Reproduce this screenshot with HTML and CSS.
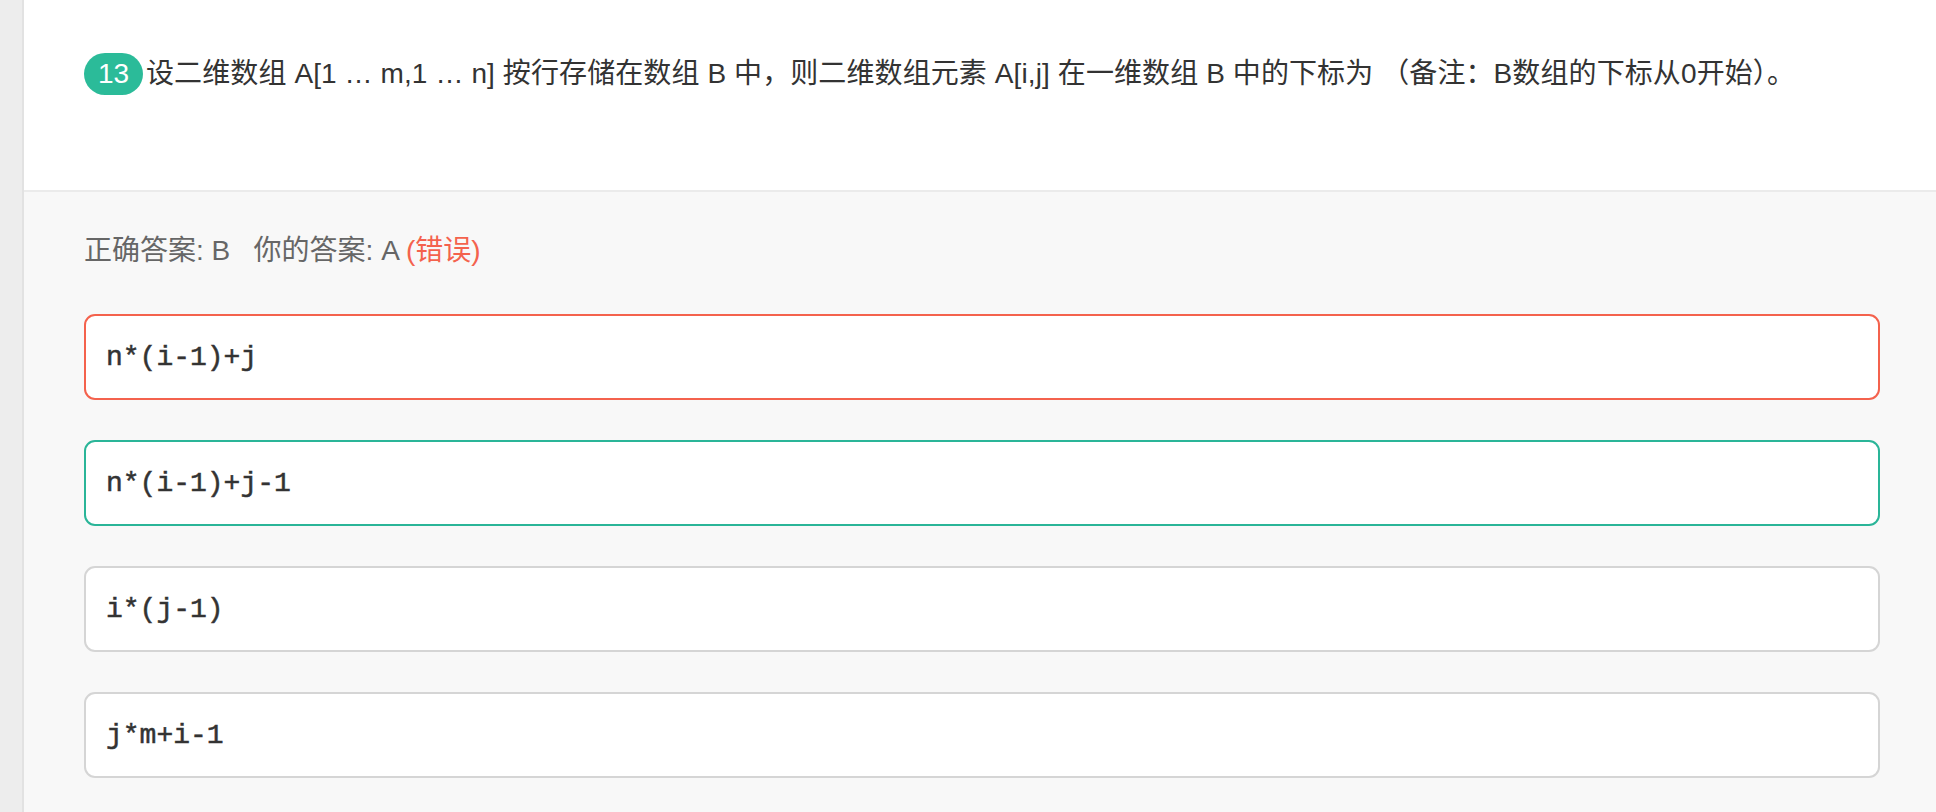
FILE: index.html
```html
<!DOCTYPE html>
<html lang="zh-CN">
<head>
<meta charset="utf-8">
<title>题目 13</title>
<link rel="stylesheet" href="styles.css">
</head>
<body>
<div class="page">
  <aside class="sidebar"></aside>
  <main class="main">
    <section class="question">
      <span class="badge">13</span>
      <span class="q-text">设二维数组 A[1 … m,1 … n] 按行存储在数组 B 中，则二维数组元素 A[i,j] 在一维数组 B 中的下标为 （备注：B数组的下标从0开始）。</span>
    </section>
    <section class="answers">
      <p class="result">正确答案: B &nbsp; 你的答案: A <span class="wrong">(错误)</span></p>
      <ul class="options">
        <li class="option option-wrong">n*(i-1)+j</li>
        <li class="option option-right">n*(i-1)+j-1</li>
        <li class="option">i*(j-1)</li>
        <li class="option">j*m+i-1</li>
      </ul>
    </section>
  </main>
</div>
</body>
</html>
```
FILE: styles.css
```css
* { box-sizing: border-box; }
html, body { margin: 0; padding: 0; height: 100%; }
body {
  font-family: "Liberation Sans", "Noto Sans CJK SC", sans-serif;
  color: #333;
  background: #f8f8f8;
}
.page {
  display: flex;
  min-height: 812px;
}
.sidebar {
  width: 24px;
  flex: none;
  background: #ededed;
  border-right: 2px solid #e2e2e2;
}
.main {
  flex: 1;
  display: flex;
  flex-direction: column;
}
.question {
  height: 192px;
  background: #fff;
  border-bottom: 2px solid #ebebeb;
  padding: 53px 56px 0 60px;
  display: flex;
  align-items: flex-start;
  font-size: 28px;
  line-height: 42px;
}
.badge {
  flex: none;
  width: 59px;
  height: 42px;
  border-radius: 21px;
  background: #2bbb99;
  color: #fff;
  text-align: center;
  font-size: 28px;
  line-height: 42px;
  margin-right: 3px;
}
.q-text {
  color: #333;
  white-space: nowrap;
  letter-spacing: 0.1px;
}
.answers {
  flex: 1;
  background: #f8f8f8;
  padding: 41px 56px 0 60px;
}
.result {
  margin: 0 0 45px;
  font-size: 28px;
  line-height: 36px;
  color: #666;
}
.wrong { color: #f4624d; }
.options {
  list-style: none;
  margin: 0;
  padding: 0;
  display: flex;
  flex-direction: column;
  gap: 40px;
}
.option {
  height: 86px;
  background: #fff;
  border: 2px solid #d5d5d5;
  border-radius: 11px;
  padding: 0 20px;
  display: flex;
  align-items: center;
  font-family: "Liberation Mono", monospace;
  font-weight: normal;
  -webkit-text-stroke: 0.5px #333;
  font-size: 28px;
  color: #333;
}
.option-wrong { border-color: #f4624d; }
.option-right { border-color: #2ab598; }
```
